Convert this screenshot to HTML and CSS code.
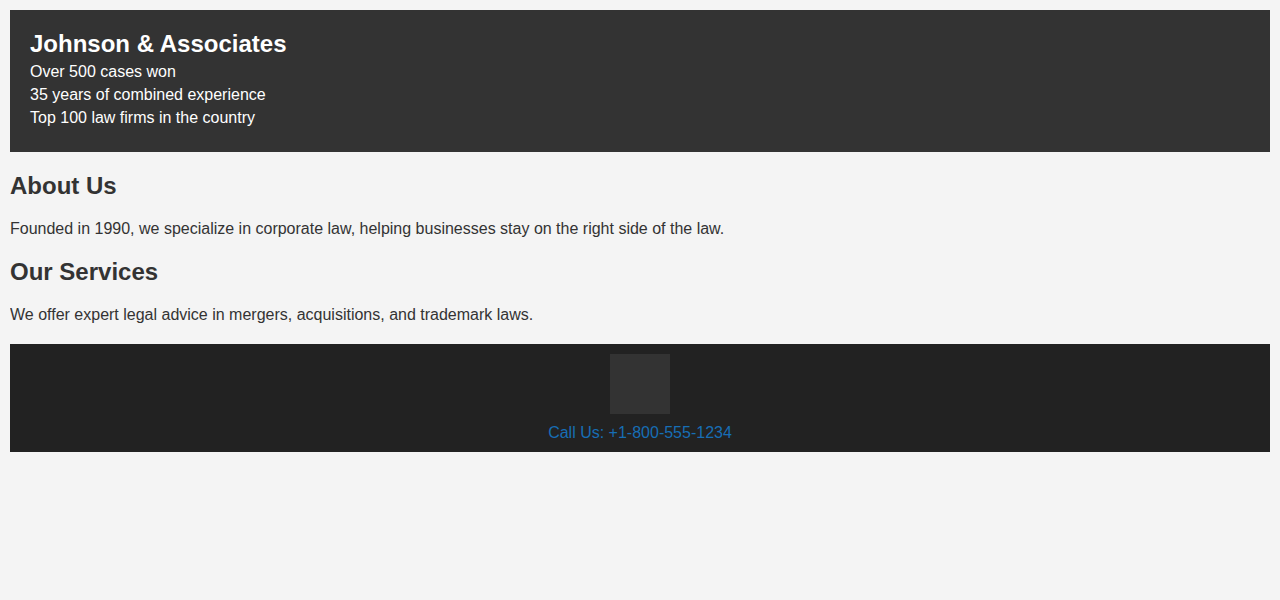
FILE: index.html
```html
<!DOCTYPE html>
<html lang="en">
<head>
<meta charset="utf-8">
<title>Johnson &amp; Associates</title>
<link rel="stylesheet" href="styles.css">
</head>
<body>
<header class="hero">
  <h1 class="hero-title">Johnson &amp; Associates</h1>
  <p class="hero-line">Over 500 cases won</p>
  <p class="hero-line">35 years of combined experience</p>
  <p class="hero-line">Top 100 law firms in the country</p>
</header>
<section class="section">
  <h2 class="section-title">About Us</h2>
  <p class="section-text">Founded in 1990, we specialize in corporate law, helping businesses stay on the right side of the law.</p>
</section>
<section class="section">
  <h2 class="section-title">Our Services</h2>
  <p class="section-text">We offer expert legal advice in mergers, acquisitions, and trademark laws.</p>
</section>
<footer class="footer">
  <div class="footer-logo"></div>
  <a class="footer-call" href="#">Call Us: +1-800-555-1234</a>
</footer>
</body>
</html>
```

FILE: styles.css
```css
html, body {
  background: #f4f4f4;
}
body {
  margin: 10px;
  font-family: "Liberation Sans", Arial, sans-serif;
  font-size: 16px;
  color: #333;
}
.hero {
  background: #333;
  color: #fff;
  padding: 20px;
}
.hero-title {
  margin: 0;
  font-size: 24px;
  font-weight: bold;
}
.hero-line {
  margin: 5px 0;
}
.section-title {
  font-size: 24px;
  margin: 20px 0;
}
.section-text {
  margin: 16px 0;
}
.footer {
  margin-top: 20px;
  background: #222;
  padding: 10px;
  display: flex;
  flex-direction: column;
  align-items: center;
  gap: 10px;
}
.footer-logo {
  width: 60px;
  height: 60px;
  background: #333;
}
.footer-call {
  color: #176eb5;
  text-decoration: none;
  line-height: normal;
}
```
